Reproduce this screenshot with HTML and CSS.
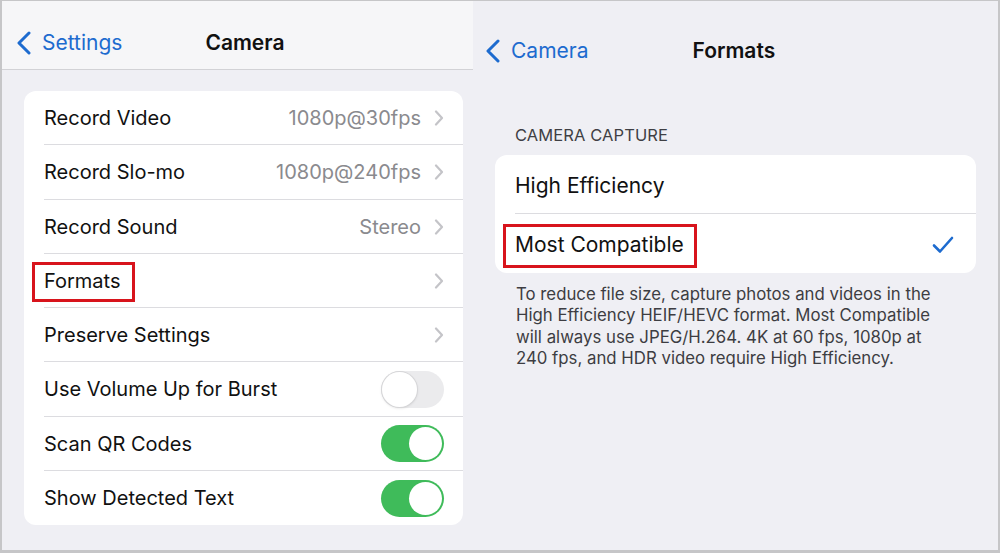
FILE: index.html
```html
<!DOCTYPE html>
<html lang="en">
<head>
<meta charset="utf-8">
<title>Camera Formats</title>
<link rel="stylesheet" href="styles.css">
</head>
<body>
<div class="frame">
  <section class="pane pane-left">
    <header class="nav nav-left">
      <a class="back">
        <svg class="back-chev" viewBox="0 0 16 24" width="16" height="24"><path d="M13 2 L3 12 L13 22" /></svg>
        <span>Settings</span>
      </a>
      <h1 class="title title-left">Camera</h1>
    </header>
    <div class="card list">
      <div class="row"><div class="row-inner"><span class="label">Record Video</span><span class="value">1080p@30fps</span><svg class="chev" viewBox="0 0 10 16" width="10" height="16"><path d="M2 1.5 L8 8 L2 14.5" /></svg></div></div>
      <div class="row"><div class="row-inner"><span class="label">Record Slo-mo</span><span class="value">1080p@240fps</span><svg class="chev" viewBox="0 0 10 16" width="10" height="16"><path d="M2 1.5 L8 8 L2 14.5" /></svg></div></div>
      <div class="row"><div class="row-inner"><span class="label">Record Sound</span><span class="value">Stereo</span><svg class="chev" viewBox="0 0 10 16" width="10" height="16"><path d="M2 1.5 L8 8 L2 14.5" /></svg></div></div>
      <div class="row"><div class="row-inner"><span class="label hl hl-left">Formats</span><svg class="chev" viewBox="0 0 10 16" width="10" height="16"><path d="M2 1.5 L8 8 L2 14.5" /></svg></div></div>
      <div class="row"><div class="row-inner"><span class="label">Preserve Settings</span><svg class="chev" viewBox="0 0 10 16" width="10" height="16"><path d="M2 1.5 L8 8 L2 14.5" /></svg></div></div>
      <div class="row"><div class="row-inner"><span class="label">Use Volume Up for Burst</span><span class="toggle"></span></div></div>
      <div class="row"><div class="row-inner"><span class="label">Scan QR Codes</span><span class="toggle on"></span></div></div>
      <div class="row"><div class="row-inner"><span class="label">Show Detected Text</span><span class="toggle on"></span></div></div>
    </div>
  </section>
  <section class="pane pane-right">
    <header class="nav nav-right">
      <a class="back">
        <svg class="back-chev" viewBox="0 0 16 24" width="16" height="24"><path d="M13 2 L3 12 L13 22" /></svg>
        <span>Camera</span>
      </a>
      <h1 class="title title-right">Formats</h1>
    </header>
    <h2 class="section-label">CAMERA CAPTURE</h2>
    <div class="card choices">
      <div class="choice"><div class="choice-inner"><span class="choice-label">High Efficiency</span></div></div>
      <div class="choice"><div class="choice-inner"><span class="choice-label hl hl-right">Most Compatible</span><svg class="check" viewBox="0 0 22 18" width="22" height="18"><path d="M2 9.5 L8 15.5 L20 2" /></svg></div></div>
    </div>
    <p class="footer">To reduce file size, capture photos and videos in the High Efficiency HEIF/HEVC format. Most Compatible will always use JPEG/H.264. 4K at 60 fps, 1080p at 240 fps, and HDR video require High Efficiency.</p>
  </section>
</div>
</body>
</html>
```
FILE: styles.css
```css
* { box-sizing: border-box; }
html, body { margin: 0; padding: 0; }
body {
  width: 1000px;
  height: 553px;
  font-family: Inter, "Noto Sans", "Liberation Sans", sans-serif;
  color: #111;
  background: #c6c6c8;
}
.frame {
  width: 1000px;
  height: 553px;
  display: flex;
  border-style: solid;
  border-color: #c6c6c8;
  border-width: 1px 2px 3px 2px;
  background: #efeff4;
}
.pane-left {
  width: 471px;
  flex: none;
}
.pane-right {
  flex: 1;
}

/* nav bars */
.nav {
  display: flex;
  align-items: center;
}
.nav-left {
  height: 69px;
  padding: 27px 0 11px 14px;
  background: #f6f6f8;
  border-bottom: 1px solid #d2d2d6;
}
.nav-right {
  height: 65px;
  padding: 35px 0 0 12px;
}
.back {
  display: flex;
  align-items: center;
  gap: 10px;
  color: #1d6bcf;
  font-size: 21px;
  line-height: 30px;
  text-decoration: none;
}
.back-chev path {
  fill: none;
  stroke: #1d6bcf;
  stroke-width: 3;
  stroke-linecap: round;
  stroke-linejoin: round;
}
.title {
  margin: 0;
  font-size: 21px;
  line-height: 30px;
  font-weight: 600;
  color: #111;
}
.title-left { margin-left: 83px; }
.title-right { margin-left: 104px; }

/* cards */
.card {
  background: #fff;
  border-radius: 12px;
}
.list {
  margin: 21px 0 0 22px;
  width: 439px;
}
.row {
  height: 54.25px;
  display: flex;
  padding-left: 20px;
}
.row-inner {
  flex: 1;
  display: flex;
  align-items: center;
  padding: 1px 19px 0 0;
  border-bottom: 1px solid #dcdce0;
}
.row:last-child .row-inner { border-bottom: none; }
.label {
  font-size: 20px;
  line-height: 24px;
  margin-right: auto;
  color: #111;
}
.value {
  font-size: 20px;
  color: #8a8a8e;
  margin-right: 13px;
}
.chev path {
  fill: none;
  stroke: #c4c4c8;
  stroke-width: 2.2;
  stroke-linecap: round;
  stroke-linejoin: round;
}

/* toggles */
.toggle {
  position: relative;
  width: 63px;
  height: 37px;
  border-radius: 19px;
  background: #ebebed;
  flex: none;
}
.toggle::after {
  content: "";
  position: absolute;
  top: 1px;
  left: 1px;
  width: 35px;
  height: 35px;
  border-radius: 50%;
  background: #fff;
  box-shadow: 0 0 0 1px #d6d6d8, 0 1px 3px rgba(0, 0, 0, 0.15);
}
.toggle.on { background: #3fbb5a; }
.toggle.on::after {
  left: auto;
  right: 2px;
  top: 2px;
  width: 33px;
  height: 33px;
  box-shadow: none;
}

/* highlight boxes */
.hl { position: relative; }
.hl::after {
  content: "";
  position: absolute;
  border: 3px solid #d8141c;
}
.hl-left::after { left: -12px; right: -14px; top: -7px; bottom: -9px; }
.hl-right::after { left: -12px; right: -13px; top: -8px; bottom: -10px; }

/* right pane */
.section-label {
  margin: 59px 0 0 42px;
  font-size: 16.5px;
  line-height: 20px;
  font-weight: 400;
  color: #3f3f44;
  letter-spacing: 0.1px;
}
.choices {
  margin: 10px 0 0 22px;
  width: 481px;
}
.choice {
  height: 59px;
  display: flex;
  padding-left: 20px;
}
.choice-inner {
  flex: 1;
  display: flex;
  align-items: center;
  padding: 3px 22px 0 0;
  border-bottom: 1px solid #dcdce0;
}
.choice:last-child .choice-inner { border-bottom: none; }
.choice-label {
  font-size: 21px;
  line-height: 26px;
  margin-right: auto;
  color: #111;
}
.check path {
  fill: none;
  stroke: #1d6bcf;
  stroke-width: 2.6;
  stroke-linecap: round;
  stroke-linejoin: round;
}
.footer {
  margin: 11px 0 0 43px;
  width: 425px;
  font-size: 16.8px;
  line-height: 21.3px;
  color: #3d3d42;
}
```
